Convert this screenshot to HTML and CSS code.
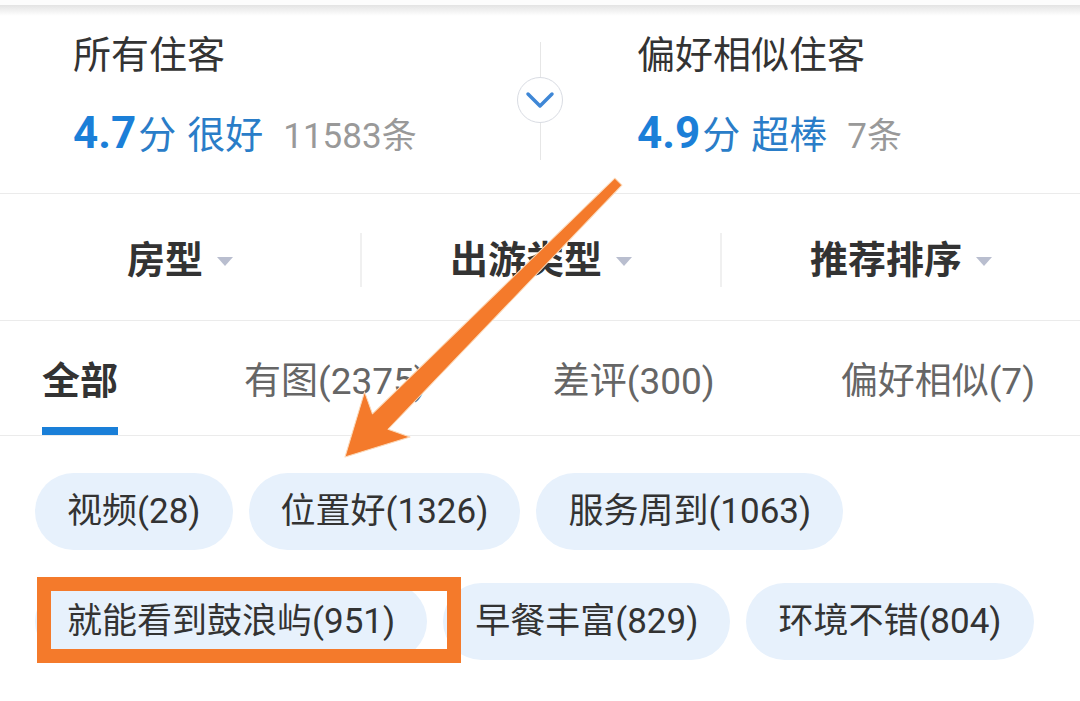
FILE: index.html
```html
<!DOCTYPE html>
<html lang="zh-CN">
<head>
<meta charset="utf-8">
<title>点评</title>
<link rel="stylesheet" href="styles.css">
</head>
<body>
<div class="page">
  <div class="topshade"></div>
  <section class="summary">
    <div class="sum-col sum-left">
      <div class="sum-title">所有住客</div>
      <div class="sum-score"><span class="num">4.7</span><span class="unit">分</span><span class="word">很好</span><span class="count">11583条</span></div>
    </div>
    <div class="sum-mid">
      <div class="vline vline-top"></div>
      <div class="circle">
        <svg width="46" height="46" viewBox="0 0 46 46"><polyline points="11,17 23,29 35,17" fill="none" stroke="#3f87d6" stroke-width="3.5" stroke-linecap="round" stroke-linejoin="round"/></svg>
      </div>
      <div class="vline vline-bottom"></div>
    </div>
    <div class="sum-col sum-right">
      <div class="sum-title">偏好相似住客</div>
      <div class="sum-score"><span class="num">4.9</span><span class="unit">分</span><span class="word">超棒</span><span class="count">7条</span></div>
    </div>
  </section>
  <nav class="filters">
    <div class="filter"><span>房型</span><i class="caret"></i></div>
    <div class="filter"><span>出游类型</span><i class="caret"></i></div>
    <div class="filter"><span>推荐排序</span><i class="caret"></i></div>
  </nav>
  <div class="tabs">
    <div class="tab active">全部</div>
    <div class="tab">有图(2375)</div>
    <div class="tab">差评(300)</div>
    <div class="tab">偏好相似(7)</div>
  </div>
  <div class="tags">
    <span class="tag">视频(28)</span>
    <span class="tag">位置好(1326)</span>
    <span class="tag">服务周到(1063)</span>
    <span class="tag">就能看到鼓浪屿(951)</span>
    <span class="tag">早餐丰富(829)</span>
    <span class="tag">环境不错(804)</span>
  </div>
  <div class="highlight"></div>
  <svg class="arrow" width="1080" height="701" viewBox="0 0 1080 701">
    <g transform="translate(345 457) rotate(-45.2)">
      <polygon points="0,0 60,-32 50,-11 388,-5 388,5 50,11 60,32" fill="#f47a2b" stroke="#fbd9b9" stroke-width="1" stroke-linejoin="round"/>
    </g>
  </svg>
</div>
</body>
</html>
```

FILE: styles.css
```css
html, body {
  margin: 0;
  padding: 0;
  background: #fff;
}

body {
  font-family: Roboto, "Noto Sans CJK SC", sans-serif;
  color: #333;
}

.page {
  position: relative;
  width: 1080px;
  height: 701px;
  overflow: hidden;
  background: #fff;
}

.topshade {
  height: 16px;
  background: linear-gradient(#fcfcfc 0, #fcfcfc 5px, #e3e3e3 5px, #ffffff 16px);
}

/* summary */
.summary {
  display: grid;
  grid-template-columns: 1fr 46px 1fr;
  height: 178px;
  box-sizing: border-box;
  border-bottom: 1px solid #ebebeb;
}

.sum-col {
  padding-top: 20px;
}

.sum-left {
  padding-left: 73px;
}

.sum-right {
  padding-left: 74px;
}

.sum-title {
  font-size: 38px;
  line-height: 38px;
  color: #333;
}

.sum-score {
  display: flex;
  align-items: baseline;
  margin-top: 37px;
  line-height: 44px;
  white-space: nowrap;
}

.num {
  font-size: 44px;
  font-weight: 700;
  color: #1b7fd8;
}

.unit {
  font-size: 38px;
  color: #2a7dc8;
  margin-left: 2px;
}

.word {
  font-size: 38px;
  color: #2a7dc8;
  margin-left: 11px;
}

.count {
  font-size: 35px;
  color: #999;
  margin-left: 20px;
}

.sum-mid {
  display: flex;
  flex-direction: column;
  align-items: center;
  padding-top: 26px;
}

.vline {
  width: 1px;
  background: #e6e6e6;
}

.vline-top {
  height: 35px;
}

.vline-bottom {
  height: 37px;
}

.circle {
  width: 46px;
  height: 46px;
  box-sizing: border-box;
  border: 1.5px solid #d9dce3;
  border-radius: 50%;
  display: flex;
  align-items: center;
  justify-content: center;
}

.circle svg {
  display: block;
  flex: none;
}

/* filters */
.filters {
  display: grid;
  grid-template-columns: repeat(3, 1fr);
  align-items: center;
  height: 127px;
  box-sizing: border-box;
  padding-top: 5px;
  border-bottom: 1px solid #ebebeb;
}

.filter {
  display: flex;
  justify-content: center;
  align-items: center;
  gap: 14px;
  height: 54px;
  font-size: 38px;
  font-weight: 700;
  line-height: 1;
  color: #333;
}

.filter + .filter {
  border-left: 2px solid #f0f0f0;
}

.caret {
  width: 0;
  height: 0;
  border-left: 8.5px solid transparent;
  border-right: 8.5px solid transparent;
  border-top: 9px solid #b9becf;
  margin-top: 3px;
}

/* tabs */
.tabs {
  display: flex;
  gap: 126px;
  padding-left: 42px;
  height: 115px;
  box-sizing: border-box;
  border-bottom: 1px solid #ebebeb;
}

.tab {
  box-sizing: border-box;
  height: 114px;
  padding-top: 14px;
  border-bottom: 8px solid transparent;
  display: flex;
  align-items: center;
  font-size: 37px;
  line-height: 1;
  color: #666;
  white-space: nowrap;
}

.tab.active {
  font-size: 38px;
  font-weight: 700;
  color: #333;
  border-bottom-color: #1a7fd8;
}

/* tags */
.tags {
  display: flex;
  flex-wrap: wrap;
  gap: 33px 16px;
  padding: 37px 0 0 35px;
}

.tag {
  height: 77px;
  padding: 0 32px;
  border-radius: 39px;
  background: #e7f1fc;
  font-size: 35px;
  line-height: 1;
  color: #333;
  display: flex;
  align-items: center;
  white-space: nowrap;
}

/* overlays */
.highlight {
  position: absolute;
  left: 37px;
  top: 577px;
  width: 424px;
  height: 86px;
  box-sizing: border-box;
  border: 14px solid #f47a2b;
}

.arrow {
  position: absolute;
  left: 0;
  top: 0;
  pointer-events: none;
}
```
